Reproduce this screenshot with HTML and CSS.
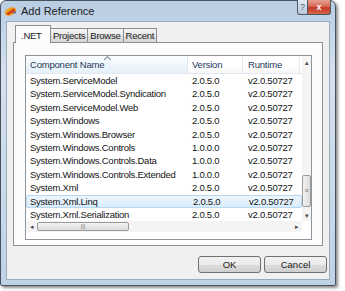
FILE: index.html
```html
<!DOCTYPE html>
<html lang="en">
<head>
    <meta charset="UTF-8">
    <title>Add Reference</title>
    <link rel="stylesheet" href="styles.css">
</head>
<body>
    <div class="window">
        <div class="titlebar">
            <svg class="app-icon" width="13" height="11" viewBox="0 0 12 10">
                <ellipse cx="6" cy="5" rx="5.5" ry="3.6" transform="rotate(-25 6 5)" fill="#f0a020"/>
                <path d="M2 7 L9 2 L10.5 3.5 L4 8.5 Z" fill="#d23a1a"/>
                <path d="M7 6.5 L10.5 4.5 L11 6.5 Z" fill="#6a4aa0"/>
            </svg>
            <span class="title">Add Reference</span>
            <div class="caption-buttons">
                <div class="cap-btn help">?</div>
                <div class="cap-btn close">x</div>
            </div>
        </div>

        <div class="client">
            <div class="tabs">
                <div class="tab active">.NET</div>
                <div class="tab">Projects</div>
                <div class="tab">Browse</div>
                <div class="tab">Recent</div>
            </div>

            <div class="panel">
                <div class="list">
                    <div class="list-main">
                        <div class="list-header">
                            <div class="col col-name">Component Name<span class="sort-arrow"></span></div>
                            <div class="col col-ver">Version</div>
                            <div class="col col-rt">Runtime</div>
                        </div>
                        <div class="rows">
                            <div class="row"><span class="col-name">System.ServiceModel</span><span class="col-ver">2.0.5.0</span><span class="col-rt">v2.0.50727</span></div>
                            <div class="row"><span class="col-name">System.ServiceModel.Syndication</span><span class="col-ver">2.0.5.0</span><span class="col-rt">v2.0.50727</span></div>
                            <div class="row"><span class="col-name">System.ServiceModel.Web</span><span class="col-ver">2.0.5.0</span><span class="col-rt">v2.0.50727</span></div>
                            <div class="row"><span class="col-name">System.Windows</span><span class="col-ver">2.0.5.0</span><span class="col-rt">v2.0.50727</span></div>
                            <div class="row"><span class="col-name">System.Windows.Browser</span><span class="col-ver">2.0.5.0</span><span class="col-rt">v2.0.50727</span></div>
                            <div class="row"><span class="col-name">System.Windows.Controls</span><span class="col-ver">1.0.0.0</span><span class="col-rt">v2.0.50727</span></div>
                            <div class="row"><span class="col-name">System.Windows.Controls.Data</span><span class="col-ver">1.0.0.0</span><span class="col-rt">v2.0.50727</span></div>
                            <div class="row"><span class="col-name">System.Windows.Controls.Extended</span><span class="col-ver">1.0.0.0</span><span class="col-rt">v2.0.50727</span></div>
                            <div class="row"><span class="col-name">System.Xml</span><span class="col-ver">2.0.5.0</span><span class="col-rt">v2.0.50727</span></div>
                            <div class="row selected"><span class="col-name">System.Xml.Linq</span><span class="col-ver">2.0.5.0</span><span class="col-rt">v2.0.50727</span></div>
                            <div class="row"><span class="col-name">System.Xml.Serialization</span><span class="col-ver">2.0.5.0</span><span class="col-rt">v2.0.50727</span></div>
                        </div>
                        <div class="hscroll">
                            <span class="arrow">&#9666;</span>
                            <div class="hthumb">|||</div>
                            <span class="arrow right">&#9656;</span>
                        </div>
                    </div>
                    <div class="vscroll">
                        <span class="arrow up">&#9652;</span>
                        <div class="vthumb">&#8801;</div>
                        <span class="arrow down">&#9662;</span>
                    </div>
                </div>
            </div>

            <div class="buttons">
                <button class="btn">OK</button>
                <button class="btn">Cancel</button>
            </div>
        </div>
    </div>
</body>
</html>
```

FILE: styles.css
```css
body {
    margin: 0;
    width: 345px;
    height: 291px;
    background: #ffffff;
    font-family: 'Liberation Sans', Arial, sans-serif;
    overflow: hidden;
}

.window {
    box-sizing: border-box;
    width: 336px;
    height: 286px;
    border: 1px solid #46525e;
    border-radius: 6px 6px 2px 2px;
    background: linear-gradient(180deg, #b9cde3 0%, #d4e1ee 25%, #c9d9ea 70%, #bfd1e4 100%);
    box-shadow: 2px 2px 3px rgba(0, 0, 0, 0.45);
    display: flex;
    flex-direction: column;
}

.titlebar {
    height: 20px;
    display: flex;
    align-items: center;
    padding-left: 3px;
    position: relative;
}

.app-icon {
    margin-right: 4px;
}

.title {
    font-size: 11px;
    color: #1b1b1b;
}

.caption-buttons {
    position: absolute;
    top: -1px;
    right: 4px;
    display: flex;
}

.cap-btn {
    height: 14px;
    border: 1px solid #4c5966;
    border-top: none;
    font-size: 9px;
    line-height: 14px;
    text-align: center;
    color: #fff;
    font-weight: bold;
}

.help {
    width: 9px;
    border-radius: 0 0 0 3px;
    background: linear-gradient(180deg, #e2ebf4, #b8c9dc);
    color: #55606c;
    font-weight: normal;
}

.close {
    width: 22px;
    border-left: none;
    border-radius: 0 0 3px 0;
    background: linear-gradient(180deg, #e6a092 0%, #d66a56 45%, #c23a26 55%, #d86448 100%);
}

.client {
    flex: 1;
    margin: 0 5px 5px 5px;
    background: #f0f0f0;
    border: 1px solid #9aabbe;
    padding: 3px 2px 0 6px;
    display: flex;
    flex-direction: column;
}

.tabs {
    display: flex;
    align-items: flex-end;
    padding-left: 2px;
    height: 17px;
    position: relative;
    z-index: 1;
}

.tab {
    height: 14px;
    box-sizing: border-box;
    border: 1px solid #8c8f96;
    border-bottom: none;
    border-left: none;
    padding: 0 2px;
    font-size: 9.5px;
    letter-spacing: -0.25px;
    line-height: 13px;
    color: #1a1a1a;
    background: linear-gradient(180deg, #f4f4f4 0%, #e9e9e9 50%, #dcdcdc 51%, #d9d9d9 100%);
}

.tab:nth-child(2) {
    border-left: 1px solid #8c8f96;
}

.tab.active {
    height: 18px;
    width: 36px;
    margin-bottom: -1px;
    border-left: 1px solid #8c8f96;
    border-right: 1px solid #8c8f96;
    background: #fcfcfc;
    padding: 3px 0 0 5px;
}

.tab.active + .tab {
    border-left: none;
}

.panel {
    height: 204px;
    box-sizing: border-box;
    margin-right: 4px;
    border: 1px solid #8c8f96;
    background: #fcfcfc;
    padding: 12px 10px 0 11px;
}

.list {
    height: 185px;
    box-sizing: border-box;
    border: 1px solid #8e949c;
    background: #ffffff;
    display: flex;
}

.list-main {
    flex: 1;
    display: flex;
    flex-direction: column;
}

.list-header {
    height: 17px;
    display: flex;
    border-bottom: 1px solid #e4e8ee;
    background: linear-gradient(180deg, #ffffff 0%, #ffffff 55%, #f6f7f9 100%);
    font-size: 9.5px;
    letter-spacing: -0.2px;
    color: #1e395b;
}

.list-header .col {
    line-height: 17px;
    border-right: 1px solid #e3e6ea;
    box-sizing: border-box;
    position: relative;
}

.col-name {
    width: 162px;
    padding-left: 4px;
    box-sizing: border-box;
}

.col-ver {
    width: 55px;
    padding-left: 4px;
    box-sizing: border-box;
}

.col-rt {
    width: 57px;
    padding-left: 5px;
    box-sizing: border-box;
}

.list-header .col-name {
    background: linear-gradient(180deg, #fbfdfe 0%, #eef6fc 55%, #e5f0f9 100%);
}

.sort-arrow {
    position: absolute;
    top: 1px;
    left: 79px;
    width: 4px;
    height: 4px;
    border-left: 1px solid #7a8796;
    border-top: 1px solid #7a8796;
    transform: rotate(45deg);
}

.rows {
    flex: 1;
    font-size: 9.5px;
    letter-spacing: -0.25px;
    color: #141414;
}

.row {
    display: flex;
    height: 13.4px;
    line-height: 13.4px;
    box-sizing: border-box;
}

.row.selected {
    background: linear-gradient(180deg, #eef6fd, #d9ecfb);
    border: 1px solid #b8d8f2;
    border-radius: 2px;
    line-height: 11.4px;
}

.row.selected span:first-child {
    padding-left: 3px;
}

.hscroll {
    height: 12px;
    margin-bottom: 7px;
    display: flex;
    align-items: center;
    background: #f4f4f4;
    color: #4a4a4a;
    font-size: 7px;
}

.hscroll .arrow {
    width: 11px;
    text-align: center;
}

.hscroll .arrow.right {
    margin-left: auto;
}

.hthumb {
    width: 92px;
    height: 9px;
    box-sizing: border-box;
    border: 1px solid #9a9a9a;
    border-radius: 2px;
    background: linear-gradient(180deg, #f3f3f3, #dcdcdc);
    font-size: 6px;
    line-height: 7px;
    text-align: center;
    color: #777;
}

.vscroll {
    width: 12px;
    height: 165px;
    display: flex;
    flex-direction: column;
    align-items: center;
    background: #f4f4f4;
    color: #4a4a4a;
    font-size: 7px;
}

.vscroll .arrow {
    height: 12px;
    line-height: 14px;
}

.vthumb {
    margin-top: auto;
    width: 9px;
    height: 32px;
    box-sizing: border-box;
    border: 1px solid #9a9a9a;
    border-radius: 2px;
    background: linear-gradient(90deg, #f3f3f3, #dcdcdc);
    font-size: 7px;
    line-height: 30px;
    text-align: center;
    color: #777;
    margin-bottom: 2px;
}

.buttons {
    display: flex;
    justify-content: flex-end;
    gap: 3px;
    margin-top: 10px;
}

.btn {
    width: 63px;
    height: 17px;
    padding: 0;
    border: 1px solid #707070;
    border-radius: 3px;
    background: linear-gradient(180deg, #f2f2f2 0%, #ebebeb 50%, #dddddd 51%, #cfcfcf 100%);
    font-family: 'Liberation Sans', Arial, sans-serif;
    font-size: 9.5px;
    color: #1a1a1a;
}
```
